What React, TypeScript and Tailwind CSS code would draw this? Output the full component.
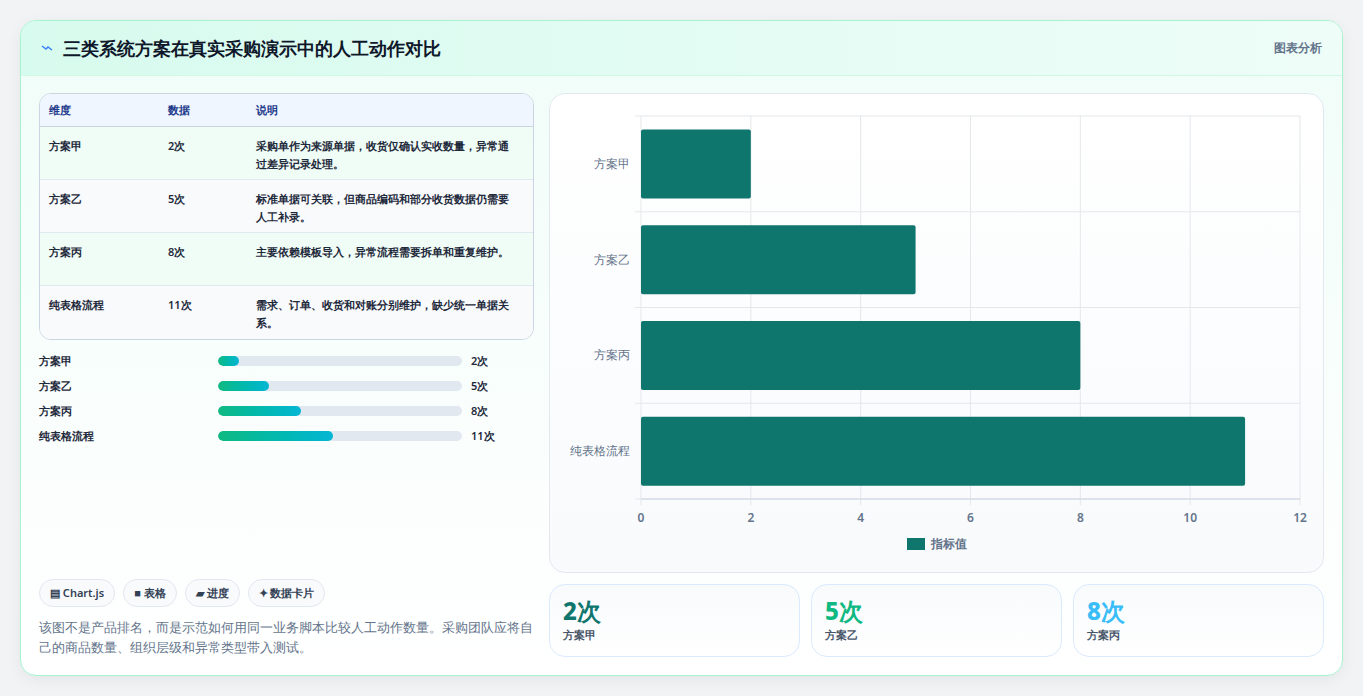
import React from "react";

const rows = [
  { name: "方案甲", val: "2次", desc: "采购单作为来源单据，收货仅确认实收数量，异常通过差异记录处理。" },
  { name: "方案乙", val: "5次", desc: "标准单据可关联，但商品编码和部分收货数据仍需要人工补录。" },
  { name: "方案丙", val: "8次", desc: "主要依赖模板导入，异常流程需要拆单和重复维护。" },
  { name: "纯表格流程", val: "11次", desc: "需求、订单、收货和对账分别维护，缺少统一单据关系。" },
];
const bars = [
  { name: "方案甲", v: 2 },
  { name: "方案乙", v: 5 },
  { name: "方案丙", v: 8 },
  { name: "纯表格流程", v: 11 },
];

const Chart = () => {
  const x0 = 91, x1 = 750, y0 = 22, y1 = 405;
  const sx = (x1 - x0) / 12;
  const rowH = (y1 - y0) / 4;
  return (
    <svg width="773" height="479" className="block">
      {[0, 2, 4, 6, 8, 10, 12].map((t) => (
        <g key={t}>
          <line x1={x0 + t * sx} x2={x0 + t * sx} y1={y0} y2={y1 + 6} stroke="#e5e7eb" />
          <text x={x0 + t * sx} y={428} textAnchor="middle" fontSize="12" fontWeight="600" fill="#64748b">{t}</text>
        </g>
      ))}
      {[0, 1, 2, 3, 4].map((i) => (
        <line key={i} x1={x0 - 6} x2={x1} y1={y0 + i * rowH} y2={y0 + i * rowH} stroke="#e5e7eb" />
      ))}
      <line x1={x0} x2={x1} y1={y1} y2={y1} stroke="#cbd5e1" />
      {bars.map((b, i) => {
        const cy = y0 + rowH * i + rowH / 2;
        return (
          <g key={b.name}>
            <rect x={x0} y={cy - 34.5} width={b.v * sx} height={69} rx="2" fill="#0f766e" />
            <text x={x0 - 11} y={cy + 4} textAnchor="end" fontSize="12" fill="#64748b">{b.name}</text>
          </g>
        );
      })}
      <rect x={357} y={444} width={18} height={12} fill="#0f766e" />
      <text x={381} y={454} fontSize="12" fontWeight="600" fill="#64748b">指标值</text>
    </svg>
  );
};

export default function App() {
  return (
    <div className="min-h-[696px] bg-[#f1f3f5] p-5 font-['Inter','Noto_Sans_CJK_SC',sans-serif]">
      <div className="overflow-hidden rounded-2xl border border-[#a7f3d0] bg-gradient-to-b from-[#f0fdf9] to-white shadow-[0_4px_16px_rgba(0,0,0,0.06)]">
        <div className="flex h-[55px] items-center justify-between border-b border-[#d1fae5] bg-gradient-to-r from-[#d7fbee] to-[#eefdf8] px-5">
          <div className="flex items-center gap-2.5">
            <svg width="12" height="8" viewBox="0 0 12 8"><path d="M1 2 L5 5 L7 3 L11 6" stroke="#3b82f6" strokeWidth="1.5" fill="none" /></svg>
            <h1 className="text-[18px] font-bold text-[#0f172a]">三类系统方案在真实采购演示中的人工动作对比</h1>
          </div>
          <span className="text-[12px] font-semibold text-[#64748b]">图表分析</span>
        </div>
        <div className="flex gap-[15px] px-[18px] pb-[18px] pt-[17px]">
          <div className="flex w-[496px] flex-col">
            <div className="overflow-hidden rounded-xl border border-[#cbd5e1] text-[11px] font-semibold text-[#1e293b]">
              <div className="flex h-[33px] items-center border-b border-[#cbd5e1] bg-[#eff6ff] px-[9px] text-[#1e3a8a]">
                <div className="w-[119px]">维度</div>
                <div className="w-[88px]">数据</div>
                <div>说明</div>
              </div>
              {rows.map((r, i) => (
                <div key={r.name} className={`flex h-[53px] px-[9px] pt-[10px] leading-[18px] ${i < 3 ? "border-b border-[#e2e8f0]" : ""} ${i % 2 ? "bg-[#f8fafc]" : "bg-[#f0fdf6]"}`}>
                  <div className="w-[119px]">{r.name}</div>
                  <div className="w-[88px]">{r.val}</div>
                  <div className="flex-1 pr-2">{r.desc}</div>
                </div>
              ))}
            </div>
            <div className="mt-[12px] flex flex-col gap-[7px]">
              {rows.map((r, i) => (
                <div key={r.name} className="flex h-[18px] items-center text-[11px] font-semibold text-[#1e293b]">
                  <div className="w-[179px]">{r.name}</div>
                  <div className="h-[10px] w-[244px] overflow-hidden rounded-full bg-[#e2e8f0]">
                    <div className="h-full rounded-full bg-gradient-to-r from-[#10b981] to-[#06b6d4]" style={{ width: `${[8.5, 21, 34, 47][i]}%` }} />
                  </div>
                  <div className="ml-[9px]">{r.val}</div>
                </div>
              ))}
            </div>
            <div className="mt-auto flex gap-2 text-[11px] font-semibold text-[#334155]">
              {["▤ Chart.js", "■ 表格", "▰ 进度", "✦ 数据卡片"].map((c) => (
                <span key={c} className="rounded-full border border-[#e2e8f0] bg-[#f8fafc] px-[10px] py-[5px]">{c}</span>
              ))}
            </div>
            <p className="mt-[10px] text-[13px] leading-[20px] text-[#64748b]">该图不是产品排名，而是示范如何用同一业务脚本比较人工动作数量。采购团队应将自己的商品数量、组织层级和异常类型带入测试。</p>
          </div>
          <div className="flex flex-1 flex-col gap-[11px]">
            <div className="h-[480px] rounded-2xl border border-[#e2e8f0] bg-gradient-to-b from-white to-[#f8fafc]">
              <Chart />
            </div>
            <div className="grid grid-cols-3 gap-[11px]">
              {[["2次", "方案甲", "text-[#0f766e]"], ["5次", "方案乙", "text-[#10b981]"], ["8次", "方案丙", "text-[#38bdf8]"]].map(([v, n, c]) => (
                <div key={n} className="h-[73px] rounded-2xl border border-[#dbeafe] bg-gradient-to-b from-[#f8fafc] to-white px-[13px] pt-[10px]">
                  <div className={`text-[24px] font-extrabold leading-[32px] ${c}`}>{v}</div>
                  <div className="text-[11px] font-semibold text-[#475569]">{n}</div>
                </div>
              ))}
            </div>
          </div>
        </div>
      </div>
    </div>
  );
}
